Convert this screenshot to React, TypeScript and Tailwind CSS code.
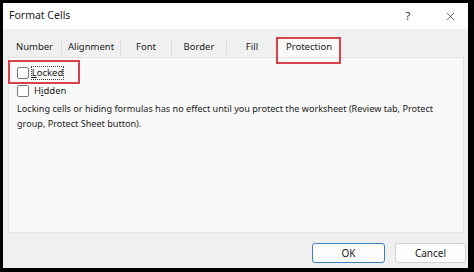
import { X } from 'lucide-react';

const TABS = [
  { label: 'Number', w: 'w-[53px]' },
  { label: 'Alignment', w: 'w-[58px]' },
  { label: 'Font', w: 'w-[50px]' },
  { label: 'Border', w: 'w-[54px]' },
  { label: 'Fill', w: 'w-[50px]' },
  { label: 'Protection', w: 'w-[64px]' },
];

export default function App() {
  return (
    <div
      className="w-[474px] h-[272px] bg-black pt-[3px] pl-[3px] pr-[6px] pb-[4px] text-[#1b1b1b]"
      style={{ fontFamily: '"Noto Sans", "Open Sans", sans-serif' }}
    >
      <div className="h-full flex flex-col bg-[#f0f0f0]">
        {/* title bar */}
        <div className="h-[26px] bg-white flex items-center pl-[6px] pr-[11px] shrink-0">
          <span className="text-[10.5px] flex-1">Format Cells</span>
          <span className="text-[11px] w-[14px] text-center mr-[29px] text-[#333]">?</span>
          <X className="w-[13px] h-[13px] text-[#333]" strokeWidth={1.3} />
        </div>

        {/* tabs */}
        <div className="h-[28px] flex items-end pl-[5px] shrink-0">
          {TABS.map((t, i) => {
            const sel = t.label === 'Protection';
            return (
              <div key={t.label} className="flex items-end">
                <div
                  className={`${t.w} h-[20px] flex items-center justify-center text-[9.5px] relative ${sel ? 'bg-[#f9f9f9] z-10' : ''}`}
                >
                  {t.label}
                  {sel && <div className="absolute -left-px top-0 w-[65px] h-[27px] border-2 border-[#d8434a]" />}
                </div>
                {i < 4 && <div className="w-px h-[16px] bg-[#dcdcdc] mb-[2px]" />}
              </div>
            );
          })}
        </div>

        {/* content panel */}
        <div className="relative ml-[5px] mr-[4px] h-[176px] bg-[#f9f9f9] border border-[#e4e4e4] shrink-0 text-[9.1px]">
          <div className="absolute -left-px top-[2px] w-[72px] h-[24px] border-2 border-[#d8434a]" />
          <div className="flex items-center pl-[8px] mt-[9px] h-[12px]">
            <span className="w-[12px] h-[12px] border border-[#7a7a7a] rounded-[2px] bg-white" />
            <span className="ml-[2px] w-[33px] h-[14px] flex items-center justify-center border border-dotted border-[#444] text-[9.5px]">
              <span><span className="underline">L</span>ocked</span>
            </span>
          </div>
          <div className="flex items-center pl-[8px] mt-[6px] h-[12px]">
            <span className="w-[12px] h-[12px] border border-[#7a7a7a] rounded-[2px] bg-white" />
            <span className="ml-[5px] text-[9.5px]">H<span className="underline">i</span>dden</span>
          </div>
          <p className="pl-[8px] pr-[4px] mt-[4px] leading-[15px]">
            Locking cells or hiding formulas has no effect until you protect the worksheet (Review tab, Protect group, Protect Sheet button).
          </p>
        </div>

        {/* footer */}
        <div className="flex-1 flex items-start justify-end pt-[10px] pr-[2px] gap-[10px]">
          <button className="w-[73px] h-[20px] bg-[#fdfdfd] border border-[#3a7fc4] rounded-[3px] text-[10px]">OK</button>
          <button className="w-[71px] h-[20px] bg-[#fdfdfd] border border-[#d0d0d0] rounded-[3px] text-[10px]">Cancel</button>
        </div>
      </div>
    </div>
  );
}
